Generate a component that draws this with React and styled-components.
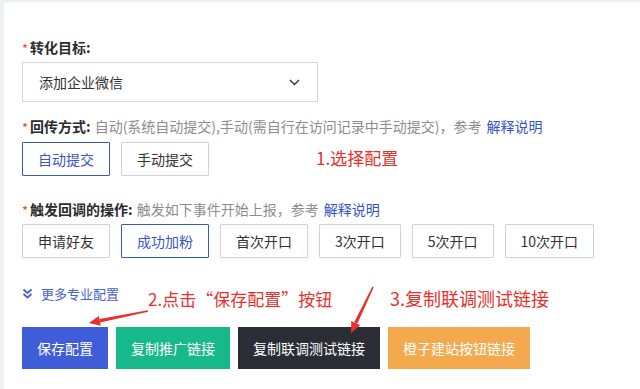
import React from 'react'
import styled, { createGlobalStyle } from 'styled-components'

const GlobalStyle = createGlobalStyle`
    html, body {
        margin: 0;
        padding: 0;
        background: #eef0f4;
        font-family: "Noto Sans CJK SC", "Noto Sans", sans-serif;
    }
`

const StyledPage = styled.div`
    width: 640px;
    height: 389px;
    overflow: hidden;
    padding: 2px 0 0 4px;
    box-sizing: border-box;
`

const StyledCard = styled.div`
    position: relative;
    background: #fff;
    border-top-left-radius: 4px;
    height: 100%;
    padding: 35px 0 0 18px;
    box-sizing: border-box;
    display: flex;
    flex-direction: column;
`

const StyledLabel = styled.div`
    display: flex;
    align-items: center;
    height: 20px;
    font-size: 14px;
    margin-top: ${(props) => props.$top || 0}px;
    white-space: nowrap;
`

const StyledStar = styled.span`
    color: #e5484d;
    font-size: 13px;
    margin-right: 2px;
    padding-top: 2px;
`

const StyledTitle = styled.span`
    color: #2b2b2b;
    font-weight: 700;
    margin-right: 4px;
`

const StyledDesc = styled.span`
    color: #8c8c8c;
`

const StyledLink = styled.span`
    color: #3552c8;
    margin-left: 5px;
`

const StyledSelect = styled.div`
    width: 296px;
    height: 40px;
    margin-top: 5px;
    box-sizing: border-box;
    border: 1px solid #d3d6db;
    display: flex;
    align-items: center;
    justify-content: space-between;
    padding: 0 17px 0 16px;
    font-size: 14px;
    color: #333;
`

const StyledOptions = styled.div`
    display: flex;
    gap: 11px;
    margin-top: ${(props) => props.$top || 5}px;
`

const StyledOption = styled.div`
    height: 34px;
    box-sizing: border-box;
    padding: 0 15px;
    display: flex;
    align-items: center;
    font-size: 14px;
    border: 1px solid ${(props) => (props.$active ? '#3a55c4' : '#cfd2d7')};
    color: ${(props) => (props.$active ? '#3a55c4' : '#333')};
    border-radius: 1px;
`

const StyledMore = styled.div`
    display: flex;
    align-items: center;
    gap: 8px;
    height: 18px;
    margin-top: 26px;
    font-size: 13px;
    color: #4a5fca;
`

const StyledActions = styled.div`
    display: flex;
    gap: 8px;
    margin-top: 25px;
`

const StyledAction = styled.div`
    height: 42px;
    padding: 0 15px;
    display: flex;
    align-items: center;
    font-size: 14px;
    color: #fff;
    background: ${(props) => props.$color};
`

const StyledNote = styled.div`
    position: absolute;
    left: ${(props) => props.$x}px;
    top: ${(props) => props.$y}px;
    font-size: ${(props) => props.$size || 17}px;
    color: #e8302c;
    white-space: nowrap;
    line-height: 1;
`

const StyledArrows = styled.svg`
    position: absolute;
    left: -4px;
    top: -2px;
    pointer-events: none;
`

const TRIGGERS = ['申请好友', '成功加粉', '首次开口', '3次开口', '5次开口', '10次开口']

const ACTIONS = [
    { label: '保存配置', color: '#3f5dd8' },
    { label: '复制推广链接', color: '#17b98a' },
    { label: '复制联调测试链接', color: '#2a2d33' },
    { label: '橙子建站按钮链接', color: '#f4a94e' },
]

const Arrow = ({ x1, y1, x2, y2 }) => {
    const dx = x2 - x1
    const dy = y2 - y1
    const len = Math.sqrt(dx * dx + dy * dy)
    const ux = dx / len
    const uy = dy / len
    const bx = x2 - ux * 11
    const by = y2 - uy * 11
    const px = -uy * 5
    const py = ux * 5
    return (
        <g fill="#e8302c">
            <polygon
                points={`${x1 - uy * 0.8},${y1 + ux * 0.8} ${x1 + uy * 0.8},${y1 - ux * 0.8} ${bx - px * 0.35},${by - py * 0.35} ${bx + px * 0.35},${by + py * 0.35}`}
            />
            <polygon points={`${x2},${y2} ${bx + px},${by + py} ${bx - px},${by - py}`} />
        </g>
    )
}

export default function App() {
    return (
        <>
            <GlobalStyle />
            <StyledPage>
                <StyledCard>
                    <StyledLabel>
                        <StyledStar>*</StyledStar>
                        <StyledTitle>转化目标:</StyledTitle>
                    </StyledLabel>
                    <StyledSelect>
                        <span>添加企业微信</span>
                        <svg width="11" height="7" viewBox="0 0 11 7">
                            <path d="M1 1 L5.5 5.5 L10 1" fill="none" stroke="#333" strokeWidth="1.4" />
                        </svg>
                    </StyledSelect>

                    <StyledLabel $top={14}>
                        <StyledStar>*</StyledStar>
                        <StyledTitle>回传方式:</StyledTitle>
                        <StyledDesc>自动(系统自动提交),手动(需自行在访问记录中手动提交)，参考</StyledDesc>
                        <StyledLink>解释说明</StyledLink>
                    </StyledLabel>
                    <StyledOptions $top={6}>
                        <StyledOption $active>自动提交</StyledOption>
                        <StyledOption>手动提交</StyledOption>
                    </StyledOptions>

                    <StyledLabel $top={23}>
                        <StyledStar>*</StyledStar>
                        <StyledTitle>触发回调的操作:</StyledTitle>
                        <StyledDesc>触发如下事件开始上报，参考</StyledDesc>
                        <StyledLink>解释说明</StyledLink>
                    </StyledLabel>
                    <StyledOptions>
                        {TRIGGERS.map((t) => (
                            <StyledOption key={t} $active={t === '成功加粉'}>
                                {t}
                            </StyledOption>
                        ))}
                    </StyledOptions>

                    <StyledMore>
                        <svg width="11" height="11" viewBox="0 0 11 11">
                            <path
                                d="M1.5 1.5 L5.5 5 L9.5 1.5 M1.5 6 L5.5 9.5 L9.5 6"
                                fill="none"
                                stroke="#4a5fca"
                                strokeWidth="1.8"
                            />
                        </svg>
                        <span>更多专业配置</span>
                    </StyledMore>

                    <StyledActions>
                        {ACTIONS.map((a) => (
                            <StyledAction key={a.label} $color={a.color}>
                                {a.label}
                            </StyledAction>
                        ))}
                    </StyledActions>

                    <StyledNote $x={312} $y={147}>1.选择配置</StyledNote>
                    <StyledNote $x={144} $y={288}>2.点击“保存配置”按钮</StyledNote>
                    <StyledNote $x={386} $y={287} $size={18}>3.复制联调测试链接</StyledNote>

                    <StyledArrows width="640" height="389" viewBox="0 0 640 389">
                        <Arrow x1={148} y1={311} x2={89} y2={323} />
                        <Arrow x1={373} y1={287} x2={351} y2={333} />
                    </StyledArrows>
                </StyledCard>
            </StyledPage>
        </>
    )
}
